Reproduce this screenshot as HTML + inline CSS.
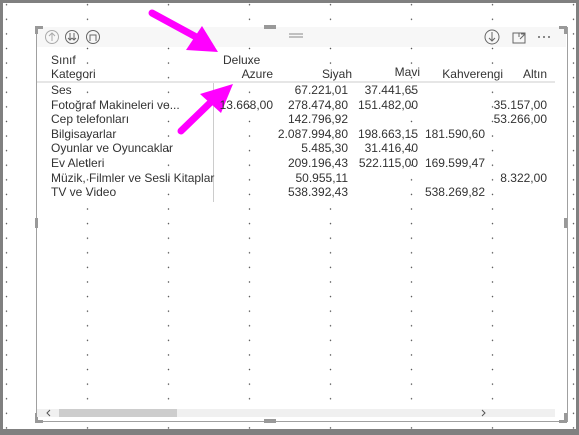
<!DOCTYPE html>
<html><head><meta charset="utf-8"><style>
body{margin:0;width:579px;height:435px;overflow:hidden;background:#808080;font-family:"Liberation Sans",sans-serif}
#c{position:absolute;left:3px;top:3px;width:573px;height:426px;background-color:#fff;
background-image:radial-gradient(circle,#555 0.6px,transparent 0.9px);background-size:81px 14.6px;background-position:-37px 9px}
#v{position:absolute;left:36px;top:27px;width:530px;height:394px;border:1px solid #a0a0a0;border-top:none;background:transparent}
.hd{position:absolute;left:37px;top:27px;width:529px;height:20px;background:#f7f7f7}
.t{position:absolute;font-size:12px;color:#333;white-space:nowrap;line-height:14px}
.r{text-align:right}
.corner{position:absolute;background:#999}
</style></head><body>
<div id="c"></div>
<div class="hd"></div>
<div id="v"></div>
<div class="corner" style="left:35px;top:26px;width:8px;height:3px"></div>
<div class="corner" style="left:35px;top:26px;width:3px;height:8px"></div>
<div class="corner" style="left:559px;top:26px;width:8px;height:3px"></div>
<div class="corner" style="left:564px;top:26px;width:3px;height:8px"></div>
<div class="corner" style="left:35px;top:420px;width:8px;height:3px"></div>
<div class="corner" style="left:35px;top:413px;width:3px;height:10px"></div>
<div class="corner" style="left:559px;top:420px;width:8px;height:3px"></div>
<div class="corner" style="left:564px;top:413px;width:3px;height:10px"></div>
<div class="corner" style="left:264px;top:25px;width:12px;height:4px"></div>
<div class="corner" style="left:264px;top:419px;width:12px;height:4px"></div>
<div class="corner" style="left:35px;top:218px;width:3px;height:10px"></div>
<div class="corner" style="left:564px;top:218px;width:3px;height:10px"></div>
<svg style="position:absolute;left:0;top:0" width="579" height="435">
<g fill="none" stroke="#aaa" stroke-width="1">
<circle cx="52" cy="37" r="6.5"/><path d="M52 41V33M49 36l3-3 3 3"/>
</g>
<g fill="none" stroke="#666" stroke-width="1">
<circle cx="72" cy="37" r="6.5"/><path d="M70 33v7M68 38l2 2 2-2M74 33v7M72 38l2 2 2-2"/>
<circle cx="93" cy="37" r="6.5"/><path d="M90 41v-6h6v6"/>
<circle cx="492" cy="37" r="7"/><path d="M492 32v9M489 38l3 3 3-3"/>
<path d="M513 33h12v10h-12zM519 33v4M520 39l5-5M521 34h4v4"/>
<path d="M289 34h14M289 37h14" stroke="#888"/>
</g>
<g fill="#666"><circle cx="539" cy="37" r="1"/><circle cx="544" cy="37" r="1"/><circle cx="549" cy="37" r="1"/></g>
<line x1="37" y1="82" x2="555" y2="82" stroke="#ccc"/>
<line x1="213.5" y1="83" x2="213.5" y2="202" stroke="#ccc"/>
<rect x="37" y="409" width="518" height="8" fill="#f0f0f0"/>
<rect x="59" y="409" width="118" height="8" fill="#cdcdcd"/>
<path d="M50 410l-3 3 3 3M482 410l3 3-3 3" fill="none" stroke="#555"/>
<g stroke="#ff00ff" stroke-width="7" stroke-linecap="round" fill="#ff00ff">
<line x1="152" y1="13" x2="198" y2="38"/>
<line x1="181" y1="131" x2="212" y2="101"/>
</g>
<polygon points="218,52 186,50 202,26" fill="#ff00ff"/>
<polygon points="233,84 221,113 200,94" fill="#ff00ff"/>
</svg>
<div class="t" style="left:51px;top:53px">Sınıf</div>
<div class="t" style="left:51px;top:67px">Kategori</div>
<div class="t" style="left:223px;top:53px">Deluxe</div>
<div class="t r" style="left:200px;width:73px;top:67px">Azure</div>
<div class="t r" style="left:280px;width:72px;top:67px">Siyah</div>
<div class="t r" style="left:360px;width:60px;top:65px">Mavi</div>
<div class="t r" style="left:430px;width:73px;top:67px">Kahverengi</div>
<div class="t r" style="left:505px;width:42px;top:67px">Altın</div>
<div style="position:absolute;left:51px;top:83px;line-height:14.6px;font-size:12px;color:#333">Ses<br>Fotoğraf Makineleri ve...<br>Cep telefonları<br>Bilgisayarlar<br>Oyunlar ve Oyuncaklar<br>Ev Aletleri<br>Müzik, Filmler ve Sesli Kitaplar<br>TV ve Video</div>
<div style="position:absolute;left:200px;width:73px;top:83px;line-height:14.6px;font-size:12px;color:#333;text-align:right;overflow:hidden"><br><span style="margin-left:-10px">13.668,00</span></div>
<div style="position:absolute;left:260px;width:88px;top:83px;line-height:14.6px;font-size:12px;color:#333;text-align:right">67.221,01<br>278.474,80<br>142.796,92<br>2.087.994,80<br>5.485,30<br>209.196,43<br>50.955,11<br>538.392,43</div>
<div style="position:absolute;left:350px;width:68px;top:83px;line-height:14.6px;font-size:12px;color:#333;text-align:right">37.441,65<br>151.482,00<br>&nbsp;<br>198.663,15<br>31.416,40<br>522.115,00</div>
<div style="position:absolute;left:420px;width:65px;top:83px;line-height:14.6px;font-size:12px;color:#333;text-align:right">&nbsp;<br>&nbsp;<br>&nbsp;<br>181.590,60<br>&nbsp;<br>169.599,47<br>&nbsp;<br>538.269,82</div>
<div style="position:absolute;left:490px;width:57px;top:83px;line-height:14.6px;font-size:12px;color:#333;text-align:right">&nbsp;<br>35.157,00<br>53.266,00<br>&nbsp;<br>&nbsp;<br>&nbsp;<br>8.322,00</div>
</body></html>
